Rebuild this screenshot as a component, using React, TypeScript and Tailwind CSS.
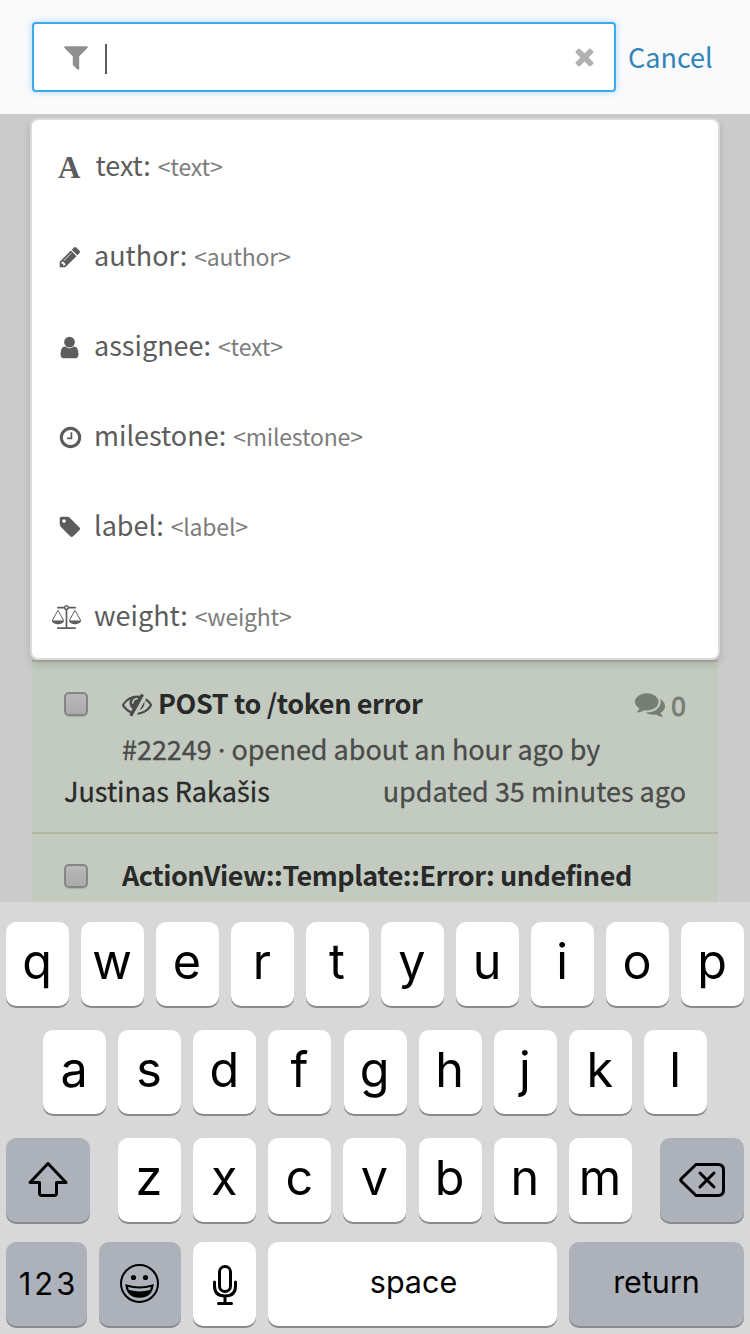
import type { ReactNode } from "react";

const paths = {
  filter:
    "M1595 295q17 41-14 70l-493 493v742q0 42-39 59-13 5-25 5-27 0-45-19l-256-256q-19-19-19-45v-486l-493-493q-31-29-14-70 17-39 59-39h1280q42 0 59 39z",
  times:
    "M1490 1322q0 40-28 68l-136 136q-28 28-68 28t-68-28l-294-294-294 294q-28 28-68 28t-68-28l-136-136q-28-28-28-68t28-68l294-294-294-294q-28-28-28-68t28-68l136-136q28-28 68-28t68 28l294 294 294-294q28-28 68-28t68 28l136 136q28 28 28 68t-28 68l-294 294 294 294q28 28 28 68z",
  pencil:
    "M491 1536l91-91-235-235-91 91v107h128v128h107zm523-928q0-22-22-22-10 0-17 7l-542 542q-7 7-7 17 0 22 22 22 10 0 17-7l542-542q7-7 7-17zm-54-192l416 416-832 832h-416v-416zm683 96q0 53-37 90l-166 166-416-416 166-165q36-38 90-38 53 0 91 38l235 234q37 39 37 91z",
  user:
    "M1536 1399q0 109-62.5 187t-150.5 78h-854q-88 0-150.5-78t-62.5-187q0-85 8.5-160.5t31.5-152 58.5-131 94-89 134.5-34.5q131 128 313 128t313-128q76 0 134.5 34.5t94 89 58.5 131 31.5 152 8.5 160.5zm-256-887q0 159-112.5 271.5t-271.5 112.5-271.5-112.5-112.5-271.5 112.5-271.5 271.5-112.5 271.5 112.5 112.5 271.5z",
  clock:
    "M1024 544v448q0 14-9 23t-23 9h-320q-14 0-23-9t-9-23v-64q0-14 9-23t23-9h224v-352q0-14 9-23t23-9h64q14 0 23 9t9 23zm416 352q0-148-73-273t-198-198-273-73-273 73-198 198-73 273 73 273 198 198 273 73 273-73 198-198 73-273zm224 0q0 209-103 385.5t-279.5 279.5-385.5 103-385.5-103-279.5-279.5-103-385.5 103-385.5 279.5-279.5 385.5-103 385.5 103 279.5 279.5 103 385.5z",
  tag:
    "M576 448q0-53-37.5-90.5t-90.5-37.5-90.5 37.5-37.5 90.5 37.5 90.5 90.5 37.5 90.5-37.5 37.5-90.5zm1067 576q0 53-37 90l-491 492q-39 37-91 37-53 0-90-37l-715-716q-38-37-64.5-101t-26.5-117v-416q0-52 38-90t90-38h416q53 0 117 26.5t102 64.5l715 714q37 39 37 91z",
  comments:
    "M1408 768q0 139-94 257t-256.5 186.5-353.5 68.5q-86 0-176-16-124 88-278 128-36 9-86 16h-3q-11 0-20.5-8t-11.5-21q-1-3-1-6.5t.5-6.5 2-6l2.5-5 3.5-5.5 4-5 4.5-5 4-4.5q5-6 23-25t26-29.5 22.5-29 25-38.5 20.5-44q-124-72-195-177t-71-224q0-139 94-257t256.5-186.5 353.5-68.5 353.5 68.5 256.5 186.5 94 257zm384 256q0 120-71 224.5t-195 176.5q10 24 20.5 44t25 38.5 22.5 29 26 29.5 23 25q1 1 4 4.5t4.5 5 4 5 3.5 5.5l2.5 5 2 6 .5 6.5-1 6.5q-3 14-13 22t-22 7q-50-7-86-16-154-40-278-128-90 16-176 16-271 0-472-132 58 4 88 4 161 0 309-45t264-129q125-92 192-212t67-254q0-77-23-152 129 71 204 178t75 230z",
  eyeSlash:
    "M555 1335l78-141q-87-63-136-159t-49-203q0-121 61-225-229 117-381 353 167 258 427 375zm389-759q0-20-14-34t-34-14q-125 0-214.5 89.5t-89.5 214.5q0 20 14 34t34 14 34-14 14-34q0-86 61-147t147-61q20 0 34-14t14-34zm363-191q0 7-1 9-106 189-316 567t-315 566l-49 89q-10 16-28 16-12 0-134-70-16-10-16-28 0-12 44-87-143-65-263.5-173t-208.5-245q-20-31-20-69t20-69q153-235 380-371t496-136q89 0 180 17l54-97q10-16 28-16 5 0 18 6t31 15.5 33 18.5 31.5 18.5 19.5 11.5q16 10 16 27zm37 447q0 139-79 253.5t-209 164.5l280-502q8 45 8 84zm448 128q0 35-20 69-39 64-109 145-150 172-347.5 267t-419.5 95l74-132q212-18 392.5-137t301.5-307q-115-179-282-294l63-112q95 64 182.5 153t144.5 184q20 34 20 69z",
  scale:
    "M1728 448l-384 704h768zm-1280 0l-384 704h768zm821-192q-14 40-45.5 71.5t-71.5 45.5v1291h608q14 0 23 9t9 23v64q0 14-9 23t-23 9h-1344q-14 0-23-9t-9-23v-64q0-14 9-23t23-9h608v-1291q-40-14-71.5-45.5t-45.5-71.5h-491q-14 0-23-9t-9-23v-64q0-14 9-23t23-9h491q21-57 70-92.5t111-35.5 111 35.5 70 92.5h491q14 0 23 9t9 23v64q0 14-9 23t-23 9h-491zm-181 16q33 0 56.5-23.5t23.5-56.5-23.5-56.5-56.5-23.5-56.5 23.5-23.5 56.5 23.5 56.5 56.5 23.5zm1088 880q0 73-46.5 131t-117.5 91-144.5 49.5-139.5 16.5-139.5-16.5-144.5-49.5-117.5-91-46.5-131q0-11 35-81t92-174.5 107-195.5 102-184 56-100q18-33 56-33t56 33q4 7 56 100t102 184 107 195.5 92 174.5 35 81zm-1280 0q0 73-46.5 131t-117.5 91-144.5 49.5-139.5 16.5-139.5-16.5-144.5-49.5-117.5-91-46.5-131q0-11 35-81t92-174.5 107-195.5 102-184 56-100q18-33 56-33t56 33q4 7 56 100t102 184 107 195.5 92 174.5 35 81z",
};

type IconProps = { name: keyof typeof paths; className: string; width?: number };

function Icon({ name, className, width = 1792 }: IconProps) {
  return (
    <svg viewBox={`0 0 ${width} 1792`} fill="currentColor" className={`shrink-0 ${className}`} aria-hidden="true">
      <path d={paths[name]} />
    </svg>
  );
}

const hints: { key: string; value: string; icon: ReactNode }[] = [
  {
    key: "text:",
    value: "<text>",
    icon: <span className="mr-[15px] ml-2 font-['Liberation_Serif',serif] text-[31px] leading-none font-bold">A</span>,
  },
  { key: "author:", value: "<author>", icon: <Icon name="pencil" className="ml-2 size-6" /> },
  { key: "assignee:", value: "<text>", icon: <Icon name="user" className="ml-[7px] size-[25px]" /> },
  { key: "milestone:", value: "<milestone>", icon: <Icon name="clock" className="ml-2 size-[25px]" /> },
  { key: "label:", value: "<label>", icon: <Icon name="tag" className="ml-2 size-6" /> },
  { key: "weight:", value: "<weight>", icon: <Icon name="scale" width={2176} className="ml-0.5 h-6 w-[29px]" /> },
];

function SearchHeader() {
  return (
    <header className="flex h-[114px] items-start bg-[#fafafa] pt-[22px] pl-8">
      <div className="flex h-[70px] w-[584px] items-center rounded border-2 border-[#3aabf0] bg-white pl-[27px] shadow-[0_0_7px_rgba(58,171,240,0.4)]">
        <Icon name="filter" className="size-[30px] text-[#8f8f8f]" />
        <span className="mt-1 ml-[14px] h-[30px] w-[1.5px] bg-[#5c5c5c]" />
        <Icon name="times" className="mr-4 mb-px ml-auto size-[27px] text-[#b1b1b1]" />
      </div>
      <a className="ml-3 h-[70px] text-[27px] leading-[70px] text-[#3084bb]">Cancel</a>
    </header>
  );
}

function Hints() {
  return (
    <ul className="relative z-10 mx-[30px] mt-1 h-[542px] rounded-lg border-2 border-[#dadada] bg-white pt-0.5 text-[#5c5c5c] shadow-[0_4px_8px_rgba(0,0,0,0.15)]">
      {hints.map((h) => (
        <li key={h.key} className="flex h-[90px] items-center pl-[18px]">
          <span className="flex min-w-11 items-center">{h.icon}</span>
          <span className="pb-[5px] text-[27px] leading-10">{h.key}</span>
          <span className="ml-[7px] pb-[3px] text-[23px] leading-10 tracking-[-0.2px] text-[#7d7d7d]">{h.value}</span>
        </li>
      ))}
    </ul>
  );
}

function Checkbox() {
  return (
    <span className="size-6 shrink-0 rounded-[5px] border-2 border-[#858585] bg-linear-to-b from-[#b9b9b9] to-[#aaaaaa] shadow-[0_1px_1px_rgba(0,0,0,0.15)]" />
  );
}

function Issues() {
  return (
    <section className="mx-8 -mt-5 h-[262px] overflow-hidden bg-[#c3cbc0] pt-5 text-[27px] text-[#4b4b4b] [-webkit-text-stroke:0.3px]">
      <article className="h-[172px] border-t-2 border-[#b1b5a3] px-8 pt-[21px]">
        <div className="flex h-[42px] items-center">
          <Checkbox />
          <Icon name="eyeSlash" className="ml-[34px] size-[30px]" />
          <h2 className="ml-[6px] pb-0.5 leading-[42px] font-bold tracking-[-0.4px] text-[#292929] [-webkit-text-stroke:0]">
            POST to /token error
          </h2>
          <Icon name="comments" className="ml-auto size-[30px] text-[#777e75]" />
          <span className="ml-1.5 pt-0.5 text-[#777e75] [-webkit-text-stroke:0.8px]">0</span>
        </div>
        <p className="mt-[3px] h-[42px] pl-[58px] leading-[42px] tracking-[-0.03px]">
          #22249 <span className="font-['Inter',sans-serif] leading-none">·</span> opened about an hour ago by
        </p>
        <div className="flex h-[42px] justify-between leading-[42px]">
          <span className="text-[#292929]">
            Justinas Raka<span className="font-['Open_Sans',sans-serif] leading-none">š</span>is
          </span>
          <span>updated 35 minutes ago</span>
        </div>
      </article>
      <article className="border-t-2 border-[#b1b5a3] px-8 pt-[21px]">
        <div className="flex h-[42px] items-center">
          <Checkbox />
          <h2 className="ml-[34px] pb-0.5 leading-[42px] font-bold tracking-[-0.47px] text-[#292929] [-webkit-text-stroke:0]">
            ActionView::Template::Error: undefined
          </h2>
        </div>
      </article>
    </section>
  );
}

function Key({ children, className = "w-[63px] bg-white" }: { children?: ReactNode; className?: string }) {
  return (
    <div className={`flex h-[84px] shrink-0 items-center justify-center rounded-[10px] shadow-[0_2px_0_#898a8d] ${className}`}>
      {children}
    </div>
  );
}

function Letter({ children }: { children: string }) {
  return (
    <Key>
      <span className="pr-px pb-[5px] text-[48.5px] leading-[84px]">{children}</span>
    </Key>
  );
}

function Keyboard() {
  return (
    <section className="h-[432px] bg-[#d8d8d8] px-1.5 pt-5 font-['Inter',sans-serif] text-black">
      <div className="flex justify-between">
        {"qwertyuiop".split("").map((c) => (
          <Letter key={c}>{c}</Letter>
        ))}
      </div>
      <div className="mt-6 flex justify-between px-[37px]">
        {"asdfghjkl".split("").map((c) => (
          <Letter key={c}>{c}</Letter>
        ))}
      </div>
      <div className="mt-6 flex justify-between">
        <Key className="w-[84px] bg-[#adb2ba]">
          <svg viewBox="0 0 84 84" className="size-[84px]" fill="none" stroke="currentColor" strokeWidth="3" strokeLinejoin="round">
            <path d="M42 25.5 24 44.5h9.5V55q0 2.5 2.5 2.5h12q2.500 0 2.500-2.500V44.500H60z" />
          </svg>
        </Key>
        <div className="flex w-[514px] justify-between">
          {"zxcvbnm".split("").map((c) => (
            <Letter key={c}>{c}</Letter>
          ))}
        </div>
        <Key className="w-[84px] bg-[#adb2ba]">
          <svg viewBox="0 0 84 84" className="size-[84px]" fill="none" stroke="currentColor" strokeWidth="3" strokeLinejoin="round" strokeLinecap="round">
            <path d="M36 26.500H58q5.500 0 5.500 5.500V52q0 5.500-5.500 5.500H36L21.500 43.500q-1.500-1.500 0-3z" />
            <path d="M40 35 54 49M54 35 40 49" />
          </svg>
        </Key>
      </div>
      <div className="mt-5 flex gap-3">
        <Key className="w-[81px] bg-[#adb2ba]">
          <span className="pl-1 text-[31px] tracking-[3px]">123</span>
        </Key>
        <Key className="w-[82px] bg-[#adb2ba]">
          <svg viewBox="0 0 82 84" className="h-[84px] w-[82px]" fill="none" stroke="currentColor" strokeWidth="2">
            <circle cx="40.500" cy="41.500" r="18.500" />
            <circle cx="34.500" cy="35.500" r="2.600" fill="currentColor" stroke="none" />
            <circle cx="46.500" cy="35.500" r="2.600" fill="currentColor" stroke="none" />
            <path d="M27.500 43.500q13 4 26 0-1.500 11-13 11t-13-11z" />
            <path d="M30 49q10.500 3 21 0-3.500 5.500-10.500 5.500T30 49z" fill="currentColor" />
          </svg>
        </Key>
        <Key>
          <svg viewBox="0 0 63 84" className="h-[84px] w-[63px]" fill="none" stroke="currentColor" strokeWidth="3" strokeLinecap="round">
            <rect x="26.500" y="24.500" width="11" height="25" rx="5.500" />
            <path d="M21.500 40v4q0 10 10.500 10t10.500-10v-4M32 54v7M25.500 61.500h13" />
          </svg>
        </Key>
        <Key className="w-[289px] bg-white">
          <span className="pb-1 pl-0.5 text-[30.5px]">space</span>
        </Key>
        <Key className="w-[175px] bg-[#adb2ba]">
          <span className="pb-1 text-[30.5px]">return</span>
        </Key>
      </div>
    </section>
  );
}

export default function App() {
  return (
    <main className="h-[1334px] w-[750px] overflow-hidden bg-[#cbcbcb] font-['Noto_Sans_CJK_SC',sans-serif]">
      <SearchHeader />
      <Hints />
      <Issues />
      <Keyboard />
    </main>
  );
}
